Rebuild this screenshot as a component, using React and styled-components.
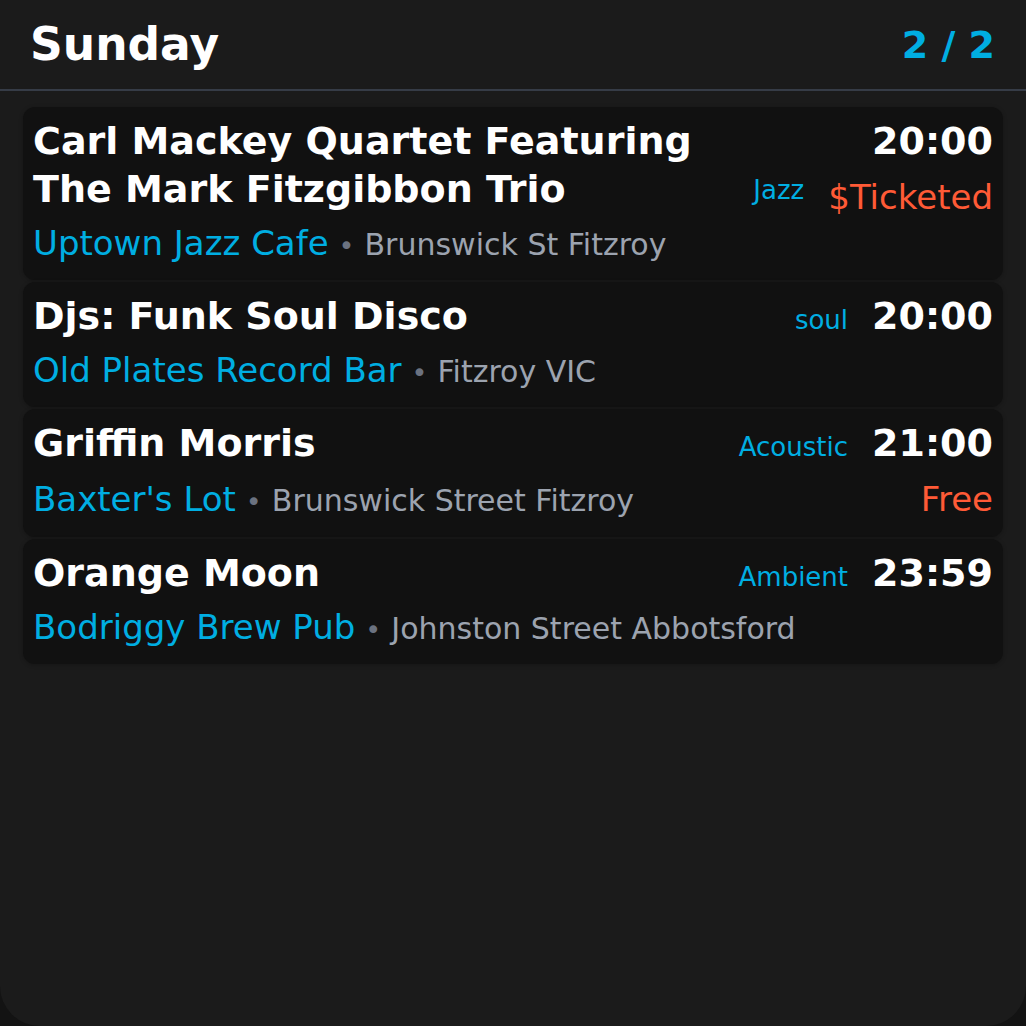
import React from "react";
import styled, { createGlobalStyle } from "styled-components";

const Global = createGlobalStyle`
  html, body { margin: 0; padding: 0; background: #131313; }
  body { font-family: "DejaVu Sans", "Noto Sans", sans-serif; }
  * { box-sizing: border-box; }
`;

const Screen = styled.div`
  min-height: 1026px;
  background: #1b1b1b;
  border-radius: 0 0 40px 40px;
  display: flex;
  flex-direction: column;
`;

const Header = styled.header`
  height: 91px;
  display: flex;
  align-items: center;
  justify-content: space-between;
  padding: 0 31px 0 30px;
  border-bottom: 2px solid #363c47;
`;

const Day = styled.h1`
  margin: 0;
  font-size: 45.5px;
  font-weight: 700;
  color: #ffffff;
  line-height: normal;
`;

const Pager = styled.div`
  font-size: 38px;
  font-weight: 700;
  color: #00aee2;
  line-height: normal;
`;

const List = styled.div`
  display: flex;
  flex-direction: column;
  gap: 2px;
  padding: 16px 23px 0;
`;

const Card = styled.article`
  display: grid;
  grid-template-columns: minmax(0, 1fr) auto;
  grid-template-rows: auto auto;
  column-gap: 24px;
  row-gap: 10px;
  padding: 11px 10px 16px;
  background: #111111;
  border-radius: 12px;
  box-shadow: 0 1px 4px rgba(0, 0, 0, 0.25);
`;

const Title = styled.div`
  grid-column: 1;
  grid-row: 1;
  font-size: 38px;
  font-weight: 700;
  line-height: 1.25;
  color: #ffffff;
`;

const Meta = styled.div`
  grid-column: 2;
  grid-row: 1 / span 2;
  display: flex;
  flex-direction: column;
  align-items: flex-end;
  gap: 9px;
`;

const TimeRow = styled.div`
  display: flex;
  align-items: baseline;
  gap: 24px;
`;

const PriceRow = styled.div`
  display: flex;
  align-items: flex-start;
  gap: 24px;
`;

const Time = styled.span`
  font-size: 38px;
  font-weight: 700;
  line-height: 1.25;
  color: #ffffff;
`;

const Genre = styled.span`
  font-size: 26px;
  line-height: normal;
  color: #00aee2;
`;

const Price = styled.span`
  font-size: 34px;
  line-height: 1.3;
  color: #ff5a36;
`;

const VenueLine = styled.div`
  grid-column: 1;
  grid-row: 2;
  display: flex;
  align-items: baseline;
  gap: 10px;
  line-height: 1.2;
  white-space: nowrap;
`;

const Venue = styled.span`
  font-size: 34px;
  color: #00aee2;
`;

const Dot = styled.span`
  font-size: 27px;
  color: #6b7280;
`;

const Address = styled.span`
  font-size: 30px;
  color: #9ca3af;
`;

const events = [
  {
    title: "Carl Mackey Quartet Featuring The Mark Fitzgibbon Trio",
    time: "20:00",
    genre: "Jazz",
    price: "$Ticketed",
    genreWithPrice: true,
    venue: "Uptown Jazz Cafe",
    address: "Brunswick St Fitzroy",
  },
  {
    title: "Djs: Funk Soul Disco",
    time: "20:00",
    genre: "soul",
    venue: "Old Plates Record Bar",
    address: "Fitzroy VIC",
  },
  {
    title: "Griffin Morris",
    time: "21:00",
    genre: "Acoustic",
    price: "Free",
    venue: "Baxter's Lot",
    address: "Brunswick Street Fitzroy",
  },
  {
    title: "Orange Moon",
    time: "23:59",
    genre: "Ambient",
    venue: "Bodriggy Brew Pub",
    address: "Johnston Street Abbotsford",
  },
];

function EventCard({ e }) {
  return (
    <Card>
      <Title>{e.title}</Title>
      <Meta>
        <TimeRow>
          {!e.genreWithPrice && <Genre>{e.genre}</Genre>}
          <Time>{e.time}</Time>
        </TimeRow>
        {e.price && (
          <PriceRow>
            {e.genreWithPrice && <Genre>{e.genre}</Genre>}
            <Price>{e.price}</Price>
          </PriceRow>
        )}
      </Meta>
      <VenueLine>
        <Venue>{e.venue}</Venue>
        <Dot>•</Dot>
        <Address>{e.address}</Address>
      </VenueLine>
    </Card>
  );
}

export default function App() {
  return (
    <>
      <Global />
      <Screen>
        <Header>
          <Day>Sunday</Day>
          <Pager>2 / 2</Pager>
        </Header>
        <List>
          {events.map((e, i) => (
            <EventCard key={i} e={e} />
          ))}
        </List>
      </Screen>
    </>
  );
}
